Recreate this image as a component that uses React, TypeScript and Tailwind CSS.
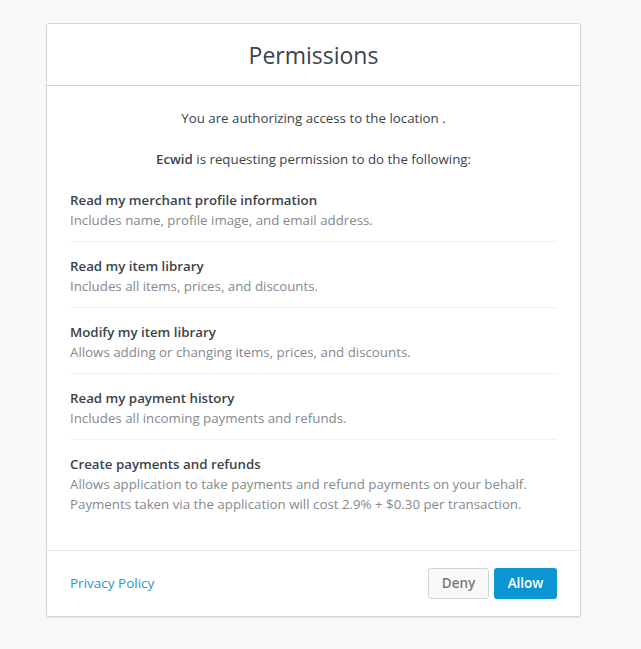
import React from "react";

const items = [
  { t: "Read my merchant profile information", d: ["Includes name, profile image, and email address."] },
  { t: "Read my item library", d: ["Includes all items, prices, and discounts."] },
  { t: "Modify my item library", d: ["Allows adding or changing items, prices, and discounts."] },
  { t: "Read my payment history", d: ["Includes all incoming payments and refunds."] },
  {
    t: "Create payments and refunds",
    d: [
      "Allows application to take payments and refund payments on your behalf.",
      "Payments taken via the application will cost 2.9% + $0.30 per transaction.",
    ],
  },
];

export default function App() {
  return (
    <div
      className="w-[641px] h-[649px] bg-[#f8f8f8] pt-[23px] pl-[46px]"
      style={{ fontFamily: '"Open Sans", "Liberation Sans", sans-serif' }}
    >
      <div className="w-[535px] bg-white border border-[#d2d6da] rounded-[3px] shadow-[0_1px_1px_rgba(0,0,0,0.08)]">
        <div className="h-[62px] pt-[2px] border-b border-[#c9cdd1] flex items-center justify-center">
          <h1 className="text-[23px] text-[#3b434c] leading-none">Permissions</h1>
        </div>
        <div className="px-[23px] pt-[22px] pb-[36px] text-[13.3px] leading-[20px]">
          <p className="text-center text-[#3b434c]">You are authorizing access to the location .</p>
          <p className="text-center text-[#3b434c] mt-[21px]">
            <span className="font-semibold">Ecwid</span> is requesting permission to do the following:
          </p>
          <div className="mt-[11px]">
            {items.map((it, i) => (
              <div
                key={i}
                className={`${i > 0 ? "pt-[14px]" : "pt-[10px]"} ${i < items.length - 1 ? "pb-[11px] border-b border-[#eef0f1]" : ""}`}
              >
                <div className="font-semibold text-[#3b434c]">{it.t}</div>
                {it.d.map((l, j) => (
                  <div key={j} className="text-[#85898d]">{l}</div>
                ))}
              </div>
            ))}
          </div>
        </div>
        <div className="border-t border-[#e6e8ea] h-[66px] px-[23px] flex items-center justify-between">
          <a className="text-[13.5px] text-[#2a95cd]">Privacy Policy</a>
          <div className="flex gap-[5px]">
            <button className="h-[31px] w-[61px] rounded-[3px] border border-[#d3d6d9] bg-[#f9f9f9] text-[13.5px] font-semibold text-[#75797d]">
              Deny
            </button>
            <button className="h-[31px] w-[63px] rounded-[3px] bg-[#0b95d3] text-[13.5px] font-semibold text-white">
              Allow
            </button>
          </div>
        </div>
      </div>
    </div>
  );
}
